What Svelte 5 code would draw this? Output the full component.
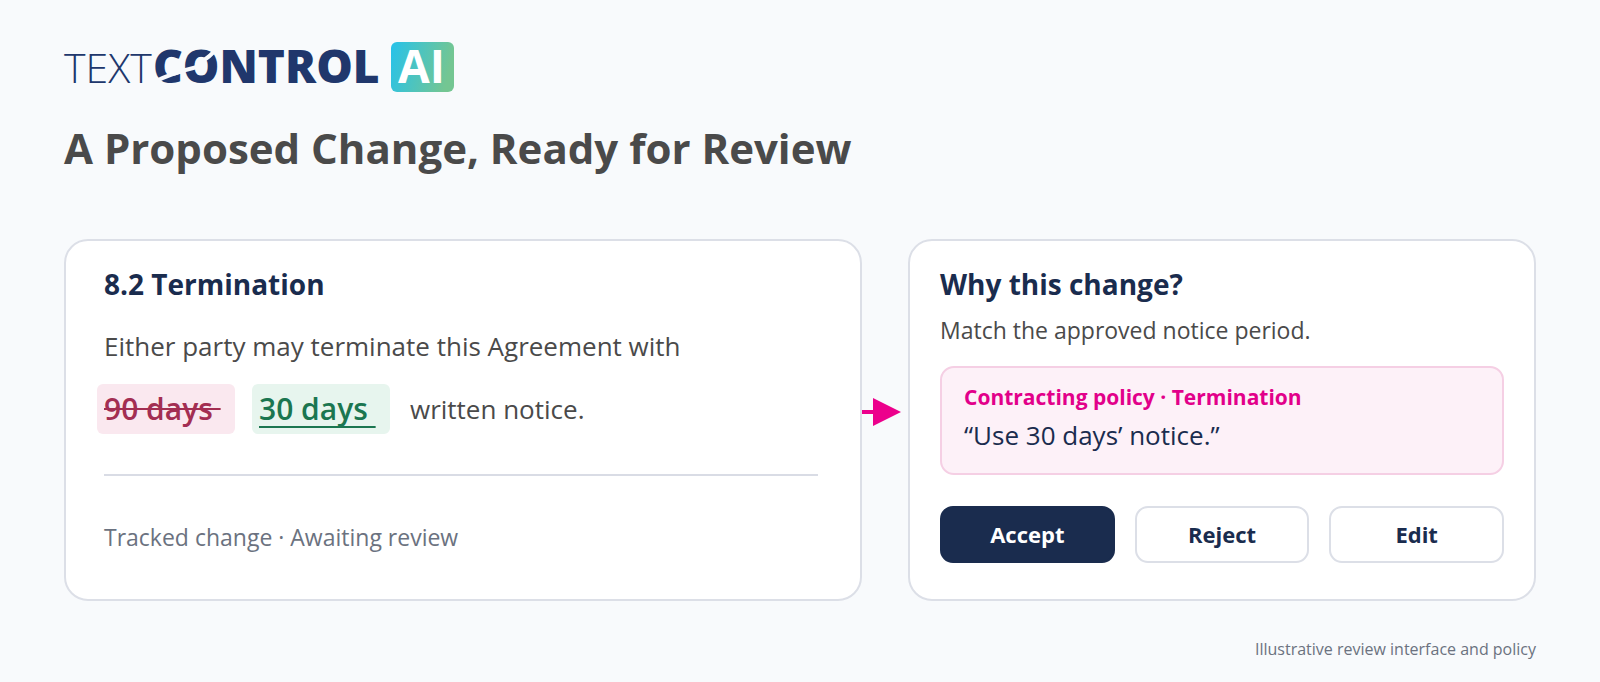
<script lang="ts">
    interface Action {
        id: string;
        label: string;
    }

    const actions: Action[] = [
        { id: 'accept', label: 'Accept' },
        { id: 'reject', label: 'Reject' },
        { id: 'edit', label: 'Edit' }
    ];
</script>

<main class="page">
    <header class="header">
        <svg class="logo" width="392" height="52" viewBox="0 0 392 52" role="img" aria-label="Text Control AI">
            <defs>
                <linearGradient id="ai-fill" x1="0" y1="0" x2="1" y2="0.2">
                    <stop offset="0" stop-color="#27c2ea" />
                    <stop offset="1" stop-color="#74c692" />
                </linearGradient>
            </defs>
            <text class="logo-light" x="0" y="41">TEXT</text>
            <text class="logo-bold" x="89" y="41">CONTROL</text>
            <!-- swoosh that slices through the C and the O -->
            <path class="logo-cut" d="M90 40 Q108 31 133 25" />
            <path class="logo-cut" d="M138 19 Q146 15 152 7" />
            <rect x="327" y="0" width="63" height="50" rx="6" fill="url(#ai-fill)" />
            <text class="logo-ai" x="334" y="41">AI</text>
        </svg>
        <h1 class="title">A Proposed Change, Ready for Review</h1>
    </header>

    <div class="panels">
        <section class="card clause">
            <h2 class="card-title">8.2 Termination</h2>
            <p class="clause-text">Either party may terminate this Agreement with</p>
            <p class="clause-text change-line">
                <del class="change removed"><span>90 days&nbsp;</span></del>
                <ins class="change added"><span>30 days&nbsp;</span></ins>
                <span>written notice.</span>
            </p>
            <hr class="divider" />
            <p class="status">Tracked change · Awaiting review</p>
        </section>

        <svg class="arrow" width="46" height="28" viewBox="0 0 46 28" aria-hidden="true">
            <path d="M0 12 H11 V0 L39 14 L11 28 V16 H0 Z" fill="#ec008c" />
        </svg>

        <section class="card reason">
            <h2 class="card-title">Why this change?</h2>
            <p class="reason-text">Match the approved notice period.</p>
            <div class="policy">
                <h3 class="policy-title">Contracting policy · Termination</h3>
                <p class="policy-quote">“Use 30 days’ notice.”</p>
            </div>
            <div class="actions">
                {#each actions as action (action.id)}
                    <button type="button" class="button" class:primary={action.id === 'accept'}>{action.label}</button>
                {/each}
            </div>
        </section>
    </div>

    <footer class="footnote">Illustrative review interface and policy</footer>
</main>

<style>
    :global(body) {
        background: #f8fafc;
    }

    .page {
        padding: 42px 64px 20px;
        font-family: 'Open Sans', 'Noto Sans', sans-serif;
        color: #4a4a4a;
    }

    h1,
    h2,
    h3,
    p {
        margin: 0;
    }

    .header {
        display: flex;
        flex-direction: column;
        align-items: flex-start;
        gap: 22px;
    }

    .logo {
        display: block;
        overflow: visible;
        fill: #20376c;
    }

    .logo-light {
        font-size: 41px;
        font-weight: 300;
    }

    .logo-bold,
    .logo-ai {
        font-size: 46px;
        font-weight: 800;
    }

    .logo-ai {
        fill: #ffffff;
        font-weight: 700;
    }

    .logo-cut {
        fill: none;
        stroke: #f8fafc;
        stroke-width: 4;
    }

    .title {
        font-size: 42px;
        font-weight: 700;
        line-height: 64px;
    }

    .panels {
        display: grid;
        grid-template-columns: 798fr 46px 628fr;
        margin-top: 59px;
    }

    .card {
        box-sizing: border-box;
        border: 2px solid #dcdfe7;
        border-radius: 24px;
        background: #ffffff;
    }

    .clause {
        padding: 23px 42px 38px 38px;
    }

    .reason {
        padding: 23px 30px 36px;
    }

    .card-title {
        font-size: 28px;
        font-weight: 700;
        line-height: 40px;
        color: #1a2c4e;
    }

    .clause-text {
        margin-top: 22px;
        font-size: 26px;
        line-height: 40px;
    }

    .change-line {
        display: flex;
        align-items: center;
        gap: 17px;
        margin-top: 18px;
        margin-left: -7px;
    }

    .change {
        box-sizing: border-box;
        min-width: 138px;
        padding: 5px 7px;
        border-radius: 6px;
        font-size: 30px;
        font-weight: 600;
        text-decoration: none;
    }

    .removed {
        background: #fae8ef;
        color: #a32e52;
    }

    .removed span {
        text-decoration: line-through 2px;
    }

    .added {
        margin-right: 3px;
        background: #e7f5ee;
        color: #1b7650;
    }

    .added span {
        text-decoration: underline 2px;
        text-underline-offset: 6px;
        text-decoration-skip-ink: none;
    }

    .divider {
        height: 2px;
        margin: 40px 0 0;
        border: none;
        background: #d9dce5;
    }

    .status {
        margin-top: 43px;
        font-size: 23px;
        line-height: 36px;
        color: #6b7280;
    }

    .arrow {
        align-self: center;
        margin-bottom: 16px;
    }

    .reason-text {
        margin-top: 8px;
        font-size: 23px;
        line-height: 36px;
    }

    .policy {
        margin-top: 18px;
        padding: 11px 22px 18px;
        border: 2px solid #f5cfe4;
        border-radius: 14px;
        background: #fdf1f8;
    }

    .policy-title {
        font-size: 21px;
        font-weight: 700;
        line-height: 36px;
        color: #e2008a;
    }

    .policy-quote {
        font-size: 26px;
        line-height: 40px;
        color: #1a2c4e;
    }

    .actions {
        display: grid;
        grid-template-columns: repeat(3, 1fr);
        gap: 20px;
        margin-top: 31px;
    }

    .button {
        height: 57px;
        padding: 0 12px 2px;
        border: 2px solid #dcdfe7;
        border-radius: 13px;
        background: #ffffff;
        color: #1a2c4e;
        font-family: inherit;
        font-size: 22px;
        font-weight: 700;
        cursor: pointer;
    }

    .primary {
        border-color: #1a2c4e;
        background: #1a2c4e;
        color: #ffffff;
    }

    .footnote {
        margin-top: 36px;
        font-size: 16px;
        line-height: 24px;
        text-align: right;
        color: #6b7280;
    }
</style>
